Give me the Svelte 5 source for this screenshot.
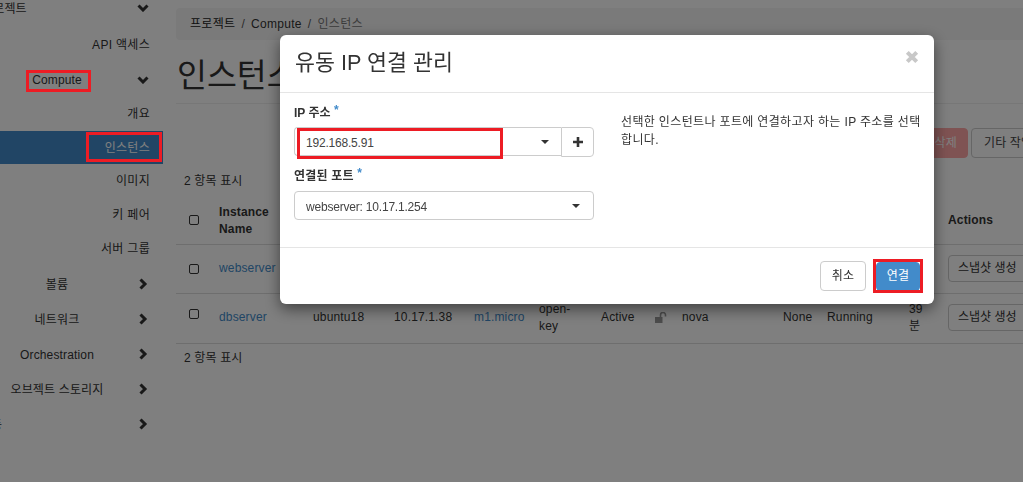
<script>
  const subA = ['API 액세스'];
  const subB = ['개요', '인스턴스', '이미지', '키 페어', '서버 그룹'];
  const parents = ['볼륨', '네트워크', 'Orchestration', '오브젝트 스토리지'];
  const cols = [35, 94, 81, 80, 65, 62, 54, 27, 101, 44, 82, 39, 120];
  const heads = ['', 'Instance Name', '이미지 이름', 'IP 주소', '크기', '키 페어', '상태', '', '가용 구역', '작업', '전원 상태', '시간', 'Actions'];
  const rows = [
    { name: 'webserver', ip: '10.17.1.254' },
    { name: 'dbserver', ip: '10.17.1.38' }
  ];
</script>

{#snippet chevDown()}
  <svg class="chev" width="12" height="8" viewBox="0 0 12 8"><path d="M1.5 1.5 6 6 10.5 1.5" /></svg>
{/snippet}
{#snippet chevRight()}
  <svg class="chev" width="12" height="12" viewBox="0 0 12 12"><path d="M3.5 1.5 8 6 3.5 10.5" /></svg>
{/snippet}
{#snippet caret()}
  <svg class="caret" width="8" height="4" viewBox="0 0 8 4"><path d="M0 0h8L4 4z" /></svg>
{/snippet}

<div class="page">
  <aside class="side">
    <div class="parent tall"><span class="label cut">프로젝트</span>{@render chevDown()}</div>
    <div class="sublist first">
      {#each subA as s}<div class="sub">{s}</div>{/each}
    </div>
    <div class="parent compute"><span class="label">Compute</span>{@render chevDown()}</div>
    <div class="sublist second">
      {#each subB as s}<div class="sub" class:active={s === '인스턴스'}>{s}</div>{/each}
    </div>
    {#each parents as p}
      <div class="parent"><span class="label">{p}</span>{@render chevRight()}</div>
    {/each}
    <div class="parent"><span class="label cut last">사용자 등</span>{@render chevRight()}</div>
  </aside>

  <main class="main">
    <nav class="crumb">
      <span class="strong">프로젝트</span><i>/</i><span>Compute</span><i>/</i><span class="muted">인스턴스</span>
    </nav>
    <h1>인스턴스</h1>
    <div class="toolbar">
      <button class="btn danger">인스턴스 삭제</button>
      <button class="btn more">기타 작업</button>
    </div>
    <div class="count">2 항목 표시</div>
    <table>
      <colgroup>{#each cols as c}<col style="width:{c}px" />{/each}</colgroup>
      <thead>
        <tr>
          {#each heads as h, i}
            <th>{#if i === 0}<span class="check"></span>{:else}{h}{/if}</th>
          {/each}
        </tr>
      </thead>
      <tbody>
        {#each rows as r}
          <tr>
            <td><span class="check"></span></td>
            <td><a href="#top">{r.name}</a></td>
            <td>ubuntu18</td>
            <td>{r.ip}</td>
            <td><a href="#top">m1.micro</a></td>
            <td>open-<br />key</td>
            <td>Active</td>
            <td>
              <svg class="lock" width="12" height="11" viewBox="0 0 12 11"><path d="M0 5h7.5v6H0z" /><path class="shackle" d="M5.5 5V3a2.4 2.4 0 0 1 5 0v1.5" /></svg>
            </td>
            <td>nova</td>
            <td>None</td>
            <td>Running</td>
            <td class="age">39<br />분</td>
            <td><button class="btn snap">스냅샷 생성</button></td>
          </tr>
        {/each}
      </tbody>
    </table>
    <div class="count bottom">2 항목 표시</div>
  </main>
</div>

<div class="backdrop"></div>
<div class="mark mark-compute"></div>
<div class="mark mark-instance"></div>

<section class="modal">
  <header class="m-head">
    <h2>유동 IP 연결 관리</h2>
    <svg class="close" width="14" height="14" viewBox="0 0 14 14"><path d="M2.3 2.3 11.7 11.7M11.7 2.3 2.3 11.7" /></svg>
  </header>
  <div class="m-body">
    <div class="form">
      <label class="f-label">IP 주소 <b>*</b></label>
      <div class="group">
        <div class="select joined"><span class="ip">192.168.5.91</span>{@render caret()}</div>
        <div class="plus">
          <svg width="10" height="10" viewBox="0 0 10 10"><path d="M5 0v10M0 5h10" /></svg>
        </div>
        <div class="mark mark-ip"></div>
      </div>
      <label class="f-label second">연결된 포트 <b>*</b></label>
      <div class="select"><span class="port">webserver: 10.17.1.254</span>{@render caret()}</div>
    </div>
    <p class="desc">선택한 인스턴트나 포트에 연결하고자 하는 IP 주소를 선택합니다.</p>
  </div>
  <footer class="m-foot">
    <button class="btn cancel">취소</button>
    <button class="btn primary">연결<span class="mark mark-ok"></span></button>
  </footer>
</section>

<style>
  :global(html), :global(body) { margin: 0; height: 100%; overflow: hidden; background: #fff; }
  :global(body) { font: 12px/17px "Liberation Sans", "Noto Sans CJK KR", sans-serif; color: #333; letter-spacing: .15px; }

  .page { display: flex; height: 482px; overflow: hidden; }

  .side { flex: 0 0 163px; margin-top: -10px; }
  .parent { display: flex; align-items: center; height: 35px; }
  .parent.tall { height: 36px; }
  .parent.compute { height: 34px; }
  .label { flex: 0 0 114px; text-align: center; white-space: nowrap; padding-top: 2px; }
  .label.cut { text-align: left; margin-left: -18px; flex-basis: 132px; }
  .label.cut.last { margin-left: -46px; flex-basis: 160px; }
  .chev { margin-left: 23px; fill: none; stroke: #333; stroke-width: 3; }
  .sublist.first { padding: 2px 0 1px; }
  .sublist.second { padding-bottom: 1px; }
  .sub { height: 33.75px; line-height: 35.75px; text-align: right; padding-right: 13px; letter-spacing: .3px; }
  .sub.active { background: #428bca; color: #fff; }

  .main { flex: 0 0 880px; padding: 8px 0 0 13px; }
  .crumb { display: flex; align-items: center; box-sizing: border-box; height: 32px; padding: 1px 0 0 14px; background: #f5f5f5; border-radius: 4px; margin-right: -20px; letter-spacing: .3px; }
  .crumb i { font-style: normal; margin: 0 6px; color: #555; }
  .strong { color: #222; }
  .muted { color: #777; }
  h1 { margin: 13px 0 0; font-size: 32.5px; font-weight: 400; line-height: 46px; padding: 0 0 8px 1px; border-bottom: 1px solid #eee; color: #333; height: 42px; box-sizing: content-box; margin-right: -20px; letter-spacing: 0; }

  .toolbar { display: flex; justify-content: flex-end; gap: 3px; margin-top: 24px; height: 30px; }
  .btn { font: inherit; letter-spacing: inherit; box-sizing: border-box; border: 1px solid #ccc; background: #fff; color: #333; border-radius: 4px; padding: 0 10px; white-space: nowrap; }
  .danger { background: #ffa6a6; border-color: #ffa6a6; color: #fff; }
  .more { width: 89px; text-align: left; padding-left: 12px; color: #444; }

  .count { margin: 15px 0 0 8px; }
  .count.bottom { margin-top: 6px; }

  table { border-collapse: collapse; table-layout: fixed; width: 884px; margin-top: 5.5px; }
  th { text-align: left; vertical-align: middle; padding: 8px 8px 6px; font-weight: 700; color: #333; }
  td { padding: 7px 8px; vertical-align: middle; border-top: 1px solid #ddd; }
  tbody tr:last-child td { border-bottom: 1px solid #ddd; padding-bottom: 8px; }
  th:first-child, td:first-child { padding: 0 0 0 13px; }
  a { color: #428bca; text-decoration: none; }
  .check { display: block; width: 8px; height: 8px; border: 1.5px solid #333; border-radius: 2px; }
  .lock { display: block; }
  .lock path { fill: #999; }
  .lock .shackle { fill: none; stroke: #999; stroke-width: 1.6; }
  .snap { height: 27px; padding: 0 9px; letter-spacing: 0; }

  .backdrop { position: fixed; inset: 0; background: rgba(0, 0, 0, .5); }
  .mark { position: absolute; box-sizing: border-box; border: 3px solid #ed1c24; pointer-events: none; }
  .mark-compute { left: 26px; top: 70px; width: 65px; height: 22px; }
  .mark-instance { left: 86px; top: 132px; width: 76px; height: 30px; }

  .modal { position: fixed; left: 280px; top: 35px; width: 654px; height: 269px; background: #fff; border-radius: 6px; box-shadow: 0 5px 15px rgba(0, 0, 0, .5); display: flex; flex-direction: column; }
  .m-head { display: flex; align-items: center; justify-content: space-between; box-sizing: border-box; height: 58px; flex: none; padding: 0 15px 2px; border-bottom: 1px solid #e5e5e5; }
  h2 { margin: 0; font-size: 21.7px; line-height: 30px; font-weight: 400; color: #333; letter-spacing: 0; }
  .close { margin-right: 0; margin-top: -11px; fill: none; stroke: #c8c8c8; stroke-width: 4; }

  .m-body { flex: 1; display: flex; gap: 27px; padding: 9px 12px 0 14px; }
  .form { flex: 0 0 300px; }
  .f-label { display: block; font-weight: 700; height: 25px; line-height: 23px; letter-spacing: 0; }
  .f-label b { color: #428bca; position: relative; top: -3px; }
  .f-label.second { margin-top: 9px; line-height: 21px; letter-spacing: .2px; }
  .group { position: relative; display: flex; height: 30px; }
  .select { display: flex; align-items: center; justify-content: space-between; box-sizing: border-box; height: 29px; border: 1px solid #ccc; border-radius: 4px; padding: 4px 13px 0 11px; background: #fff; color: #444; }
  .select.joined { flex: 1; border-radius: 4px 0 0 4px; border-right: 0; padding-right: 12px; }
  .ip, .port { letter-spacing: -.2px; }
  .caret { fill: #333; margin-top: -4px; }
  .plus { flex: 0 0 33px; display: flex; align-items: center; justify-content: center; box-sizing: border-box; border: 1px solid #ccc; border-radius: 0 4px 4px 0; }
  .plus svg { fill: none; stroke: #333; stroke-width: 2.6; }
  .mark-ip { left: 3px; top: 1px; width: 206px; height: 31px; }
  .desc { flex: 1; margin: 11px 0 0; line-height: 18px; color: #333; letter-spacing: .35px; }

  .m-foot { display: flex; justify-content: flex-end; align-items: center; gap: 10px; height: 57px; flex: none; box-sizing: border-box; padding: 0 14px 0 0; border-top: 1px solid #e5e5e5; }
  .cancel { width: 46px; height: 30px; padding: 0; }
  .primary { position: relative; width: 44px; height: 29px; padding: 1px 0 0; background: #428bca; border-color: #428bca; color: #fff; }
  .mark-ok { left: -4px; top: -4px; width: 50px; height: 34px; }
</style>
